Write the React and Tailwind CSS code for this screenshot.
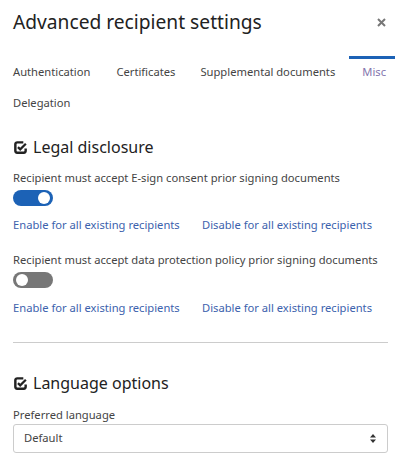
export default function App() {
  const CheckIcon = () => (
    <svg width="15" height="15" viewBox="0 0 16 16" className="shrink-0">
      <path d="M11 2.5H4.5a2 2 0 0 0-2 2v7a2 2 0 0 0 2 2h7a2 2 0 0 0 2-2V9" fill="none" stroke="#222" strokeWidth="2.6" />
      <path d="M5.3 7.6l2.4 2.4 6-6" fill="none" stroke="#222" strokeWidth="2.4" />
    </svg>
  );

  const Toggle = ({ on }) => (
    <div className={`w-[40px] h-[16px] rounded-full flex items-center px-[3px] ${on ? "bg-[#1c62b6] justify-end" : "bg-[#777] justify-start"}`}>
      <div className="w-[12px] h-[12px] rounded-full bg-white" />
    </div>
  );

  const Links = ({ className }) => (
    <div className={`flex whitespace-nowrap text-[11.2px] leading-[16px] text-[#3c62ad] ${className}`}>
      <span className="w-[189px]">Enable for all existing recipients</span>
      <span>Disable for all existing recipients</span>
    </div>
  );

  const tab = "pt-[5px] pb-[7px] border-t-[3px] border-transparent";

  return (
    <div className="w-[401px] h-[466px] bg-white px-[13px] overflow-hidden text-[#333]" style={{ fontFamily: "'Noto Sans', sans-serif" }}>
      <div className="flex items-center justify-between h-[44px]">
        <h1 className="text-[19.2px] leading-[24px] text-[#222]">Advanced recipient settings</h1>
        <svg width="9" height="9" viewBox="0 0 9 9" className="mr-[2px]">
          <path d="M1 1L8 8M8 1L1 8" stroke="#777" strokeWidth="2" />
        </svg>
      </div>

      {/* tabs */}
      <div className="whitespace-nowrap text-[11.2px] leading-[16px] text-[#444] mt-[12px]">
        <div className="flex">
          <div className={`${tab} mr-[26px]`}>Authentication</div>
          <div className={`${tab} mr-[25px]`}>Certificates</div>
          <div className={`${tab} mr-[14px]`}>Supplemental documents</div>
          <div className="pt-[5px] pb-[7px] pl-[13px] pr-[9px] border-t-[3px] border-[#1c62b6] text-[#8576ae]">Misc</div>
        </div>
        <div className="flex">
          <div className={tab}>Delegation</div>
        </div>
      </div>

      <div className="flex items-center gap-[5px] mt-[17px] h-[24px]">
        <CheckIcon />
        <h2 className="text-[16px] leading-[24px] text-[#222]">Legal disclosure</h2>
      </div>

      <div className="text-[11.2px] leading-[16px] text-[#444] mt-[11px] whitespace-nowrap">Recipient must accept E-sign consent prior signing documents</div>
      <div className="mt-[4px]"><Toggle on /></div>
      <Links className="mt-[11px]" />

      <div className="text-[11.2px] leading-[16px] text-[#444] mt-[19px] whitespace-nowrap">Recipient must accept data protection policy prior signing documents</div>
      <div className="mt-[4px]"><Toggle /></div>
      <Links className="mt-[12px]" />

      <div className="border-t border-[#ccc] mt-[26px]" />

      <div className="flex items-center gap-[5px] mt-[28px] h-[24px]">
        <CheckIcon />
        <h2 className="text-[16px] leading-[24px] text-[#222]">Language options</h2>
      </div>

      <div className="text-[11.2px] leading-[16px] text-[#444] mt-[12px]">Preferred language</div>
      <div className="mt-[1px] h-[29px] border border-[#ccc] rounded-[3px] flex items-center justify-between pl-[10px] pr-[11px] text-[11.2px] text-[#444]">
        <span>Default</span>
        <svg width="6" height="9" viewBox="0 0 6 9">
          <path d="M3 0L6 3.5H0z M3 9L0 5.5H6z" fill="#333" />
        </svg>
      </div>
    </div>
  );
}
